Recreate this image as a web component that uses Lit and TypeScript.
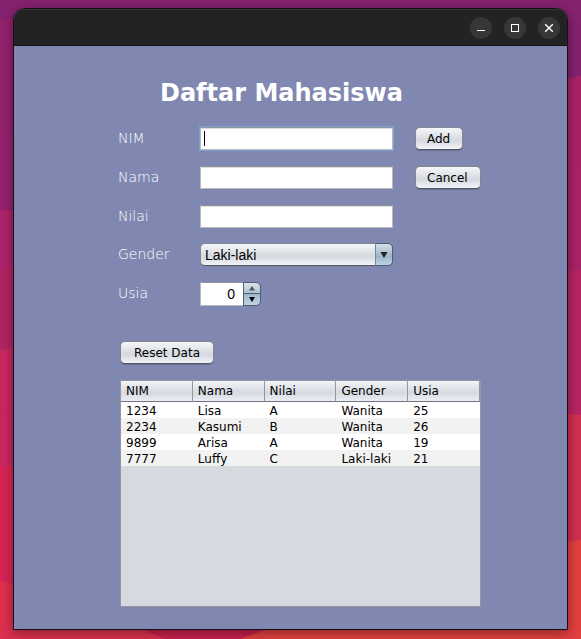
import { LitElement, html, svg, css } from "lit";
import { customElement } from "lit/decorators.js";

const COLUMNS = ["NIM", "Nama", "Nilai", "Gender", "Usia"];
const STUDENTS = [
  ["1234", "Lisa", "A", "Wanita", "25"],
  ["2234", "Kasumi", "B", "Wanita", "26"],
  ["9899", "Arisa", "A", "Wanita", "19"],
  ["7777", "Luffy", "C", "Laki-laki", "21"],
];

// Wallpaper facets along the left and right edges of the desktop.
const wallpaper = svg`
  <rect width="581" height="639" fill="#b5235e"/>
  <path d="M0 0H581V78L560 82L0 19Z" fill="#85226f"/>
  <path d="M0 19L20 22V140L0 131Z" fill="#92226c"/>
  <path d="M0 131L20 137V212L0 210Z" fill="#94226e"/>
  <path d="M0 210H20V268L0 270Z" fill="#ac2369"/>
  <path d="M0 270L20 266V346L0 351Z" fill="#b22464"/>
  <path d="M0 351L20 345V417L0 412Z" fill="#c82860"/>
  <path d="M0 412L20 416V466H0Z" fill="#c82860"/>
  <path d="M0 466H20V588L0 580Z" fill="#d82555"/>
  <path d="M0 580L180 639H0Z" fill="#dc304e"/>
  <path d="M550 82L581 76V167L550 163Z" fill="#a82366"/>
  <path d="M550 163L581 167V270H550Z" fill="#a92466"/>
  <path d="M550 270H581V415L550 411Z" fill="#b72462"/>
  <path d="M550 411L581 415V544H550Z" fill="#d03050"/>
  <path d="M120 620L300 620L240 639H165Z" fill="#c8214e"/>
  <path d="M240 639L320 610L560 543L581 540V639Z" fill="#e2403e"/>`;

@customElement("app-root")
export class AppRoot extends LitElement {
  static styles = css`
    :host {
      display: block;
      font-family: "DejaVu Sans", sans-serif;
      font-size: 12px;
      color: #000;
    }
    * { box-sizing: border-box; }
    .desktop {
      position: relative;
      display: flex;
      min-height: 100vh;
      padding: 8px 13px 9px;
      overflow: hidden;
    }
    .wallpaper { position: absolute; inset: 0; width: 100%; height: 100%; }
    .window {
      position: relative;
      flex: 1;
      display: flex;
      flex-direction: column;
      border: 1px solid #150d18;
      border-radius: 12px 12px 0 0;
      background: #8088b2;
      box-shadow: 0 3px 12px rgba(0, 0, 0, 0.4);
      overflow: hidden;
    }
    .titlebar {
      display: flex;
      justify-content: flex-end;
      align-items: center;
      gap: 12px;
      height: 37px;
      padding: 0 7px;
      background: #232323;
      border-top: 1px solid #343434;
      border-bottom: 1px solid #151515;
    }
    .control {
      width: 22px;
      height: 22px;
      padding: 0;
      border: 0;
      border-radius: 50%;
      background: #373737;
    }
    .control svg { display: block; }
    .content {
      flex: 1;
      display: flex;
      flex-direction: column;
      padding: 33px 86px 22px 104px;
    }
    h1 {
      margin: 0 0 19px 42px;
      font-size: 24px;
      line-height: 29px;
      font-weight: 700;
      color: #fff;
      white-space: nowrap;
    }
    .form {
      display: grid;
      grid-template-columns: 82px 1fr 66px;
      grid-template-rows: 23px 23px 22px 23px 24px;
      row-gap: 16px;
      align-items: start;
    }
    .form label {
      grid-column: 1;
      font-size: 14px;
      line-height: 22px;
      font-weight: 200;
      color: #fff;
    }
    .field { position: relative; grid-column: 2; margin-right: 22px; }
    .text {
      display: block;
      width: 100%;
      height: 23px;
      padding: 0 4px;
      border: 1px solid #b9babd;
      border-top-color: #929399;
      border-radius: 0;
      background: #fff;
      box-shadow: inset 0 1px 0 #dcdcdd;
      font: 14px "Liberation Sans", sans-serif;
      outline: none;
    }
    .text.active {
      box-shadow: inset 0 1px 0 #dcdcdd, 0 0 0 1px #73a4d1;
      caret-color: transparent;
    }
    .caret {
      position: absolute;
      left: 4px;
      top: 4px;
      width: 1px;
      height: 15px;
      background: #000;
    }
    .push {
      justify-self: start;
      height: 23px;
      padding: 0 12px 0 11px;
      border: 1px solid #84868f;
      border-bottom-color: #55585f;
      border-radius: 5px;
      background: linear-gradient(#f6f7f9, #dcdfe4 45%, #d5d8de 60%, #f2f4fa);
      box-shadow: 0 1px 0 rgba(80, 84, 110, 0.45);
      font: 12px "DejaVu Sans", sans-serif;
      color: #000;
      white-space: nowrap;
    }
    .select {
      display: block;
      appearance: none;
      width: 100%;
      height: 23px;
      padding: 0 20px 0 4px;
      border: 1px solid #84868f;
      border-bottom-color: #55585f;
      border-radius: 5px;
      background: linear-gradient(#f6f7f9, #dcdfe4 45%, #d5d8de 60%, #f2f4fa);
      font: 14px "Liberation Sans", sans-serif;
      color: #000;
      outline: none;
    }
    .arrow {
      position: absolute;
      right: 0;
      top: 0;
      width: 18px;
      height: 23px;
      border: 1px solid #4a6076;
      border-left-color: #6e8aa1;
      border-radius: 0 5px 5px 0;
      background: linear-gradient(#d5e0e9, #a5bbcd 50%, #9fb6c9 60%, #bfd3e4);
      pointer-events: none;
    }
    .arrow svg { display: block; }
    .spinner { display: flex; height: 24px; }
    .number {
      appearance: textfield;
      width: 43px;
      height: 24px;
      padding: 0 8px 0 0;
      border: 1px solid #b9babd;
      border-top-color: #929399;
      border-right: 0;
      border-radius: 0;
      background: #fff;
      font: 14px "Liberation Sans", sans-serif;
      text-align: right;
      outline: none;
    }
    .number::-webkit-inner-spin-button { appearance: none; margin: 0; }
    .steps { display: flex; flex-direction: column; width: 18px; }
    .step {
      height: 12px;
      padding: 0;
      border: 1px solid #4a6076;
      border-radius: 0 5px 0 0;
      background: linear-gradient(#dbe4ec, #adc0d0);
    }
    .step.down {
      border-top: 0;
      border-radius: 0 0 5px 0;
      background: linear-gradient(#9fb6c9, #bfd3e4);
    }
    .step svg { display: block; }
    .reset { align-self: flex-start; margin: 35px 0 16px 2px; padding: 0 13px; }
    .pane {
      flex: 1;
      margin-left: 2px;
      border: 1px solid #93969d;
      background: #d6d9e0;
    }
    table {
      width: 100%;
      border-collapse: separate;
      border-spacing: 0;
      table-layout: fixed;
    }
    th, td {
      padding: 0 0 0 5px;
      font-weight: 400;
      text-align: left;
      white-space: nowrap;
    }
    th {
      height: 21px;
      line-height: 20px;
      border-right: 1px solid #93969d;
      border-bottom: 1px solid #72757e;
      background: linear-gradient(#f3f4f7, #dcdfe5 45%, #d6d9e0 60%, #eceef6);
    }
    td { height: 16px; padding-top: 2px; line-height: 14px; background: #fff; }
    tr:nth-child(even) td { background: #f2f2f2; }
  `;

  render() {
    return html`
      <div class="desktop">
        <svg class="wallpaper" viewBox="0 0 581 639" preserveAspectRatio="none" aria-hidden="true">${wallpaper}</svg>
        <main class="window">
          <header class="titlebar">
            <button class="control" aria-label="Minimize">
              <svg width="22" height="22" viewBox="0 0 22 22"><path d="M7 13.5h8" stroke="#fff"/></svg>
            </button>
            <button class="control" aria-label="Maximize">
              <svg width="22" height="22" viewBox="0 0 22 22"><rect x="7.5" y="7.5" width="7" height="7" fill="none" stroke="#fff"/></svg>
            </button>
            <button class="control" aria-label="Close">
              <svg width="22" height="22" viewBox="0 0 22 22"><path d="M7.2 7.2l7.6 7.6M14.8 7.2l-7.6 7.6" stroke="#fff" stroke-width="1.4"/></svg>
            </button>
          </header>
          <section class="content">
            <h1>Daftar Mahasiswa</h1>
            <form class="form" @submit=${(e: Event) => e.preventDefault()}>
              <label for="nim">NIM</label>
              <div class="field">
                <input class="text active" id="nim" type="text" />
                <span class="caret"></span>
              </div>
              <button class="push" type="submit">Add</button>
              <label for="nama">Nama</label>
              <div class="field"><input class="text" id="nama" type="text" /></div>
              <button class="push" type="reset">Cancel</button>
              <label for="nilai">Nilai</label>
              <div class="field"><input class="text" id="nilai" type="text" /></div>
              <label for="gender">Gender</label>
              <div class="field">
                <select class="select" id="gender">
                  <option>Laki-laki</option>
                  <option>Wanita</option>
                </select>
                <span class="arrow">
                  <svg width="16" height="21" viewBox="0 0 16 21"><path d="M4.5 8h7L8 14z" fill="#1c2025"/></svg>
                </span>
              </div>
              <label for="usia">Usia</label>
              <div class="field spinner">
                <input class="number" id="usia" type="number" value="0" />
                <span class="steps">
                  <button class="step" type="button" aria-label="Increase">
                    <svg width="16" height="10" viewBox="0 0 16 10"><path d="M5 7.5h6L8 3z" fill="#55585c"/></svg>
                  </button>
                  <button class="step down" type="button" aria-label="Decrease">
                    <svg width="16" height="11" viewBox="0 0 16 11"><path d="M5 3h6L8 8z" fill="#000"/></svg>
                  </button>
                </span>
              </div>
            </form>
            <button class="push reset" type="button">Reset Data</button>
            <div class="pane">
              <table>
                <thead><tr>${COLUMNS.map((c) => html`<th scope="col">${c}</th>`)}</tr></thead>
                <tbody>
                  ${STUDENTS.map((row) => html`<tr>${row.map((v) => html`<td>${v}</td>`)}</tr>`)}
                </tbody>
              </table>
            </div>
          </section>
        </main>
      </div>
    `;
  }
}
